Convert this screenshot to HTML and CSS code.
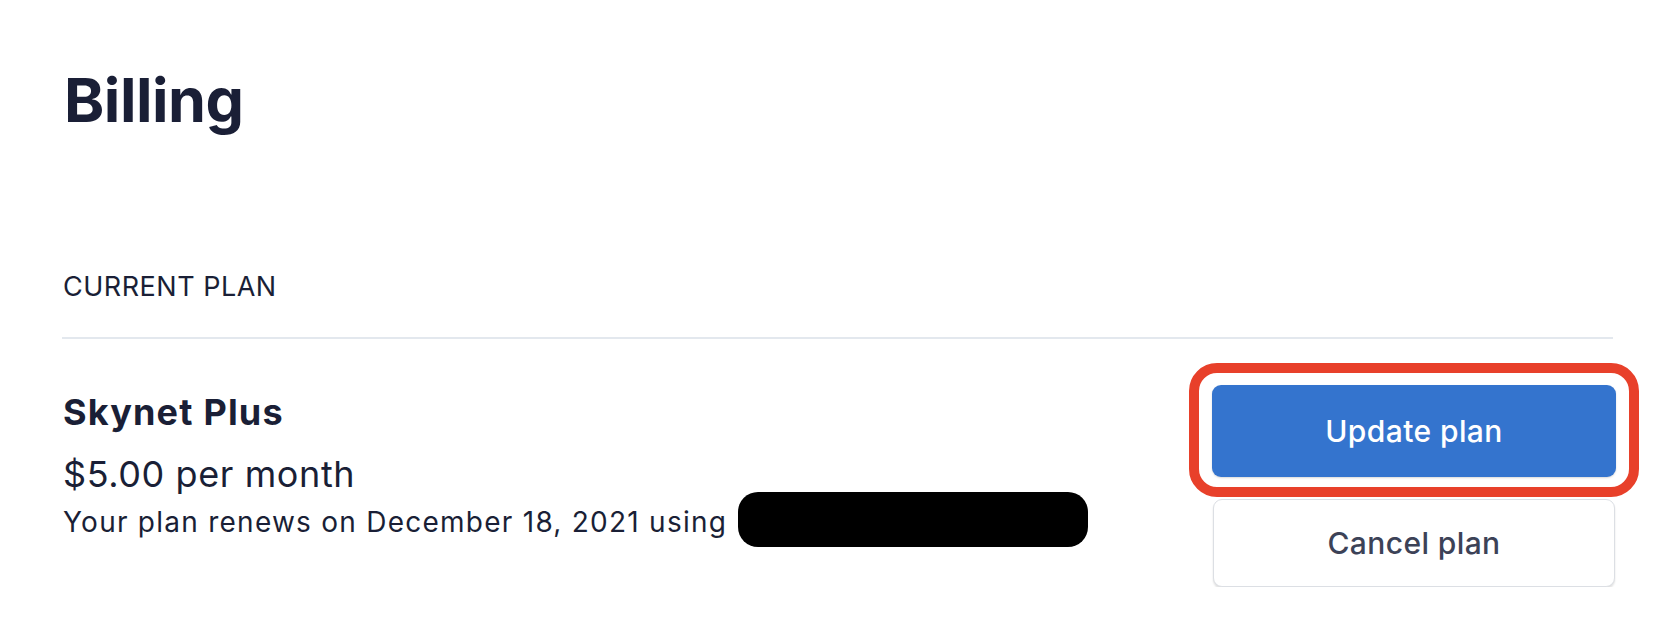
FILE: index.html
```html
<!DOCTYPE html>
<html lang="en">
<head>
<meta charset="utf-8">
<title>Billing</title>
<link rel="stylesheet" href="styles.css">
</head>
<body>
<main class="page">
  <h1 class="title">Billing</h1>
  <section class="plan-section">
    <header class="section-header">
      <h2 class="section-label">CURRENT PLAN</h2>
    </header>
    <div class="plan-row">
      <div class="plan-info">
        <div class="plan-name">Skynet Plus</div>
        <div class="plan-price">$5.00 per month</div>
        <div class="plan-renew">
          <span class="renew-text">Your plan renews on December 18, 2021 using</span>
          <span class="redacted"></span>
        </div>
      </div>
      <div class="plan-actions">
        <div class="highlight-wrap">
          <button class="btn btn-primary">Update plan</button>
          <span class="highlight"></span>
        </div>
        <button class="btn btn-secondary">Cancel plan</button>
      </div>
    </div>
  </section>
</main>
</body>
</html>
```

FILE: styles.css
```css
* {
  box-sizing: border-box;
}

html, body {
  margin: 0;
  padding: 0;
  background: #ffffff;
}

body {
  font-family: Inter, "Noto Sans", "Liberation Sans", sans-serif;
  color: #1a1f36;
}

.page {
  padding: 0 54px 0 62px;
}

.title {
  margin: 62px 0 0 2px;
  font-size: 61px;
  line-height: 76px;
  font-weight: 700;
  letter-spacing: -0.5px;
}

.section-header {
  margin-top: 131px;
  padding-bottom: 32px;
  border-bottom: 2px solid #e3e8ee;
  margin-right: 3px;
}

.section-label {
  margin: 0 0 0 1px;
  font-size: 27px;
  line-height: 36px;
  font-weight: 400;
  letter-spacing: 0.5px;
}

.plan-row {
  display: flex;
  justify-content: space-between;
  align-items: flex-start;
  padding-top: 46px;
}

.plan-info {
  padding-top: 5px;
  padding-left: 1px;
}

.plan-name {
  font-size: 36px;
  line-height: 44px;
  font-weight: 700;
  letter-spacing: 1.2px;
}

.plan-price {
  margin-top: 18px;
  font-size: 36px;
  line-height: 44px;
  font-weight: 400;
  letter-spacing: 0.6px;
}

.plan-renew {
  display: flex;
  align-items: flex-start;
  margin-top: -4px;
}

.renew-text {
  padding-top: 12px;
  font-size: 28px;
  line-height: 36px;
  letter-spacing: 1.25px;
}

.redacted {
  display: block;
  width: 350px;
  height: 55px;
  margin-left: 11px;
  background: #000000;
  border-radius: 20px;
}

.plan-actions {
  display: flex;
  flex-direction: column;
  width: 404px;
  gap: 22px;
}

.highlight-wrap {
  position: relative;
}

.highlight {
  position: absolute;
  top: -22px;
  left: -23px;
  right: -23px;
  bottom: -20px;
  border: 10px solid #e8402a;
  border-radius: 28px;
  pointer-events: none;
}

.btn {
  display: block;
  width: 100%;
  font-family: Inter, "Noto Sans", "Liberation Sans", sans-serif;
  font-size: 30px;
  font-weight: 500;
  letter-spacing: 0.4px;
  border-radius: 9px;
  cursor: pointer;
}

.btn-primary {
  height: 92px;
  border: none;
  background: #3474ce;
  color: #ffffff;
  box-shadow: 0 1px 2px rgba(0, 0, 0, 0.15);
}

.btn-secondary {
  width: 402px;
  margin-left: 1px;
  height: 88px;
  background: #ffffff;
  color: #3c4257;
  border: 1px solid #dcdfe4;
  box-shadow: 0 2px 2px rgba(0, 0, 0, 0.12);
}
```
